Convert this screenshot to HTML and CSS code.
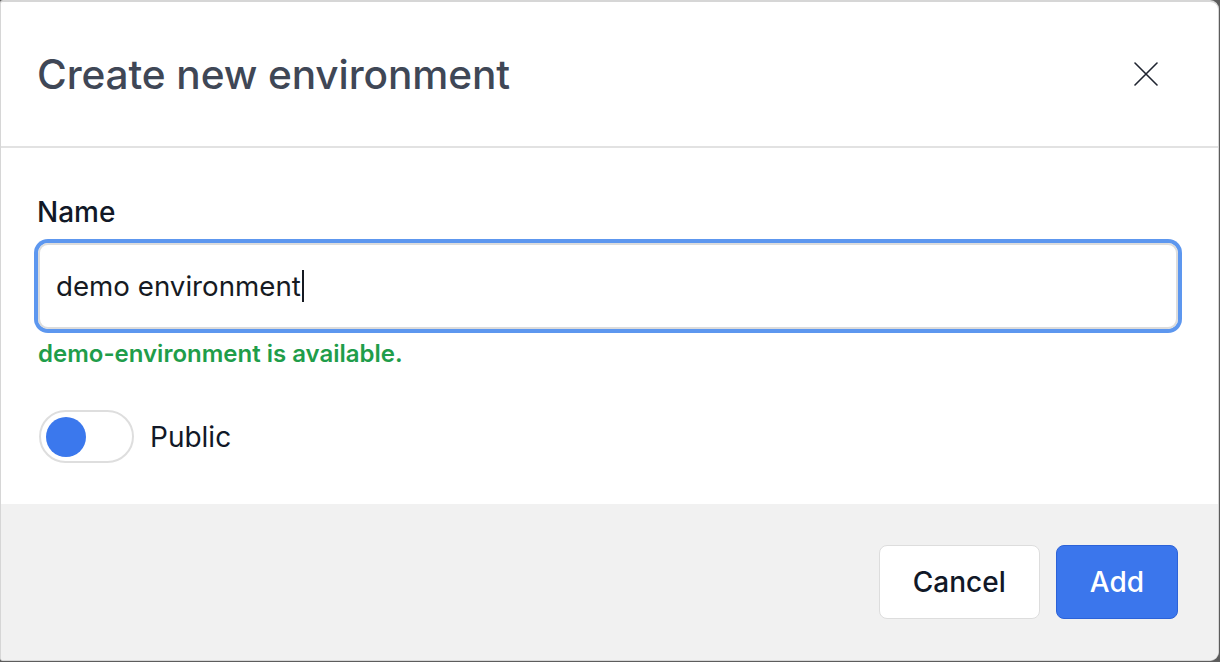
FILE: index.html
```html
<!DOCTYPE html>
<html lang="en">
<head>
<meta charset="utf-8">
<title>Create new environment</title>
<link rel="stylesheet" href="styles.css">
</head>
<body>
<div class="modal" role="dialog" aria-labelledby="modal-title">
  <header class="modal-header">
    <h1 id="modal-title" class="modal-title">Create new environment</h1>
    <button class="close-btn" aria-label="Close">
      <svg width="24" height="24" viewBox="0 0 24 24" fill="none" stroke="#1f2430" stroke-width="1.6" stroke-linecap="round">
        <path d="M1 1 L23 23 M23 1 L1 23"/>
      </svg>
    </button>
  </header>
  <div class="modal-body">
    <label class="field-label">Name</label>
    <div class="text-input" role="textbox"><span class="input-value">demo environment</span><span class="caret"></span></div>
    <p class="hint">demo-environment is available.</p>
    <div class="toggle-row">
      <span class="toggle"><span class="knob"></span></span>
      <span class="toggle-label">Public</span>
    </div>
  </div>
  <footer class="modal-footer">
    <button class="btn btn-secondary">Cancel</button>
    <button class="btn btn-primary">Add</button>
  </footer>
</div>
</body>
</html>
```
FILE: styles.css
```css
* { box-sizing: border-box; }
html, body { margin: 0; padding: 0; }
body {
  background: #5c5c5c;
  width: 1220px;
  height: 662px;
  overflow: hidden;
  font-family: Inter, "Noto Sans", sans-serif;
}
.modal {
  width: 1219px;
  height: 661px;
  background: #fff;
  border: 1px solid #d6d6d6;
  border-top-width: 2px;
  border-radius: 3px 9px 9px 3px;
  overflow: hidden;
  display: flex;
  flex-direction: column;
}
.modal-header {
  height: 146px;
  flex: none;
  display: flex;
  align-items: center;
  justify-content: space-between;
  padding: 0 60px 0 36px;
  border-bottom: 2px solid #e2e2e2;
}
.modal-title {
  margin: 0;
  font-size: 40.6px;
  font-weight: 540;
  color: #3f4756;
  letter-spacing: -0.1px;
}
.close-btn {
  border: 0;
  background: none;
  padding: 0;
  width: 24px;
  height: 24px;
  display: flex;
}
.modal-body {
  flex: none;
  height: 356px;
  padding: 44px 40px 0 37px;
  display: flex;
  flex-direction: column;
}
.field-label {
  font-size: 28px;
  line-height: 40px;
  font-weight: 500;
  color: #111827;
  margin-left: -1px;
}
.text-input {
  margin-top: 11px;
  height: 86px;
  border: 2px solid #dcdcdc;
  border-radius: 10px;
  box-shadow: 0 0 0 4px #5d97ef;
  display: flex;
  align-items: center;
  padding-left: 16px;
  font-size: 27.7px;
  color: #161a22;
}
.caret {
  display: inline-block;
  width: 2px;
  height: 32px;
  background: #161a22;
  margin-left: 1px;
}
.hint {
  margin: 9px 0 0;
  font-size: 24px;
  line-height: 32px;
  font-weight: 600;
  color: #1f9d4a;
}
.toggle-row {
  margin-top: 40px;
  display: flex;
  align-items: center;
  gap: 16px;
  padding-left: 1px;
}
.toggle {
  width: 95px;
  height: 53px;
  border: 2px solid #dedede;
  border-radius: 27px;
  padding: 5px;
  display: flex;
  align-items: center;
}
.knob {
  width: 40px;
  height: 40px;
  border-radius: 50%;
  background: #3b78ed;
}
.toggle-label {
  font-size: 28px;
  color: #111827;
}
.modal-footer {
  flex: 1;
  background: #f1f1f1;
  display: flex;
  justify-content: flex-end;
  align-items: flex-start;
  gap: 16px;
  padding: 41px 40px 0 0;
}
.btn {
  height: 74px;
  padding: 0 33px;
  border-radius: 8px;
  font-family: Inter, "Noto Sans", sans-serif;
  font-size: 28px;
  font-weight: 500;
}
.btn-secondary {
  background: #fff;
  border: 1px solid #dddddd;
  color: #111827;
}
.btn-primary {
  background: #3b76ec;
  border: 1px solid #2c62d8;
  color: #fff;
  padding: 0 33px;
}
```
